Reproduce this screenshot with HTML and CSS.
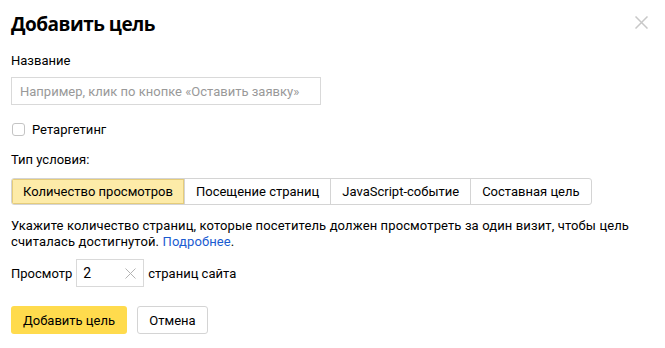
FILE: index.html
```html
<!DOCTYPE html>
<html lang="ru">
<head>
<meta charset="utf-8">
<link rel="stylesheet" href="styles.css">
</head>
<body>
<div class="dialog">
  <div class="header">
    <h1 class="title">Добавить цель</h1>
    <button class="close" aria-label="Закрыть">
      <svg width="13" height="13" viewBox="0 0 13 13"><path d="M0.5 0.5L12.5 12.5M12.5 0.5L0.5 12.5" stroke="#c8c8c8" stroke-width="1.5" fill="none"/></svg>
    </button>
  </div>
  <div class="label">Название</div>
  <div class="input name-input"><span class="placeholder">Например, клик по кнопке «Оставить заявку»</span></div>
  <label class="check-row"><span class="checkbox"></span><span>Ретаргетинг</span></label>
  <div class="label type-label">Тип условия:</div>
  <div class="segmented">
    <span class="seg active">Количество просмотров</span>
    <span class="seg">Посещение страниц</span>
    <span class="seg">JavaScript-событие</span>
    <span class="seg">Составная цель</span>
  </div>
  <p class="desc">Укажите количество страниц, которые посетитель должен просмотреть за один визит, чтобы цель считалась достигнутой. <a class="link" href="#">Подробнее</a>.</p>
  <div class="views-row">
    <span>Просмотр</span>
    <div class="input small-input"><span class="value">2</span>
      <svg class="clear" width="11" height="11" viewBox="0 0 11 11"><path d="M0.5 0.5L10.5 10.5M10.5 0.5L0.5 10.5" stroke="#b3b3b3" stroke-width="1" fill="none"/></svg>
    </div>
    <span>страниц сайта</span>
  </div>
  <div class="actions">
    <button class="btn btn-primary">Добавить цель</button>
    <button class="btn btn-default">Отмена</button>
  </div>
</div>
</body>
</html>
```
FILE: styles.css
```css
* { box-sizing: border-box; }
html, body { margin: 0; padding: 0; background: #fff; }
body {
  font-family: Roboto, "Liberation Sans", Arial, sans-serif;
  font-size: 13px;
  color: #000;
}
.dialog {
  width: 665px;
  padding: 11px 17px 0 11px;
}
.header {
  display: flex;
  justify-content: space-between;
  align-items: flex-start;
  height: 38px;
}
.title {
  margin: 0;
  font-family: "Open Sans", "Noto Sans", sans-serif;
  font-weight: 700;
  font-size: 19px;
  line-height: 27px;
  letter-spacing: -0.5px;
}
.close {
  border: 0;
  background: none;
  padding: 0;
  margin-top: 5px;
  width: 13px;
  height: 13px;
  display: block;
}
.close svg { display: block; }
.label {
  line-height: 16px;
  height: 16px;
  margin-top: 4px;
}
.input {
  border: 1px solid #d9d9d9;
  height: 28px;
  display: flex;
  align-items: center;
  padding: 0 8px;
}
.name-input {
  width: 310px;
  margin-top: 8px;
}
.placeholder { color: #999; }
.check-row {
  display: flex;
  align-items: center;
  gap: 7px;
  margin-top: 16px;
  height: 16px;
}
.checkbox {
  width: 13px;
  height: 13px;
  border: 1px solid #c4c4c4;
  border-radius: 3px;
  margin-left: 1px;
}
.type-label { margin-top: 15px; }
.segmented {
  display: inline-flex;
  margin-top: 10px;
  border: 1px solid #d4d4d4;
  border-radius: 3px;
  height: 27px;
  overflow: hidden;
}
.seg {
  display: flex;
  align-items: center;
  padding: 0 11px;
  border-left: 1px solid #d4d4d4;
  height: 100%;
  white-space: nowrap;
}
.seg:first-child { border-left: 0; }
.seg.active {
  background: #fdeba8;
  box-shadow: inset 0 0 0 1px #e5cc7a;
}
.desc {
  margin: 13px 0 0;
  line-height: 16px;
  letter-spacing: 0.12px;
}
.link { color: #1a5bd1; text-decoration: none; }
.views-row {
  display: flex;
  align-items: center;
  gap: 4px;
  margin-top: 9px;
}
.small-input {
  width: 68px;
  justify-content: space-between;
  padding: 0 7px 0 6px;
}
.value { font-size: 14px; }
.clear { display: block; }
.actions {
  display: flex;
  gap: 10px;
  margin-top: 19px;
}
.btn {
  font-family: inherit;
  font-size: 13px;
  height: 28px;
  border-radius: 3px;
  padding: 0;
  color: #000;
  white-space: nowrap;
}
.btn-primary {
  background: #ffdb4d;
  border: 0;
  width: 116px;
}
.btn-default {
  background: #fff;
  border: 1px solid #d4d4d4;
  width: 71px;
}
```
